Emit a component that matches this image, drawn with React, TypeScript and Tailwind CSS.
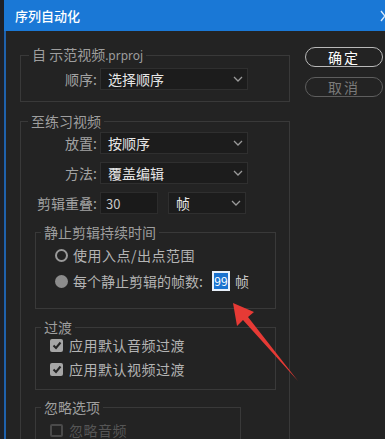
import React from 'react';

function Chevron() {
  return (
    <svg width="10" height="6" viewBox="0 0 10 6" className="shrink-0">
      <polyline points="1,1 5,5 9,1" fill="none" stroke="#9a9a9a" strokeWidth="1.3" />
    </svg>
  );
}

function Select({ value, width = 'w-[148px]' }: { value: string; width?: string }) {
  return (
    <div
      className={`flex h-[22px] ${width} items-center justify-between border border-[#2f2f2f] bg-[#1c1c1c] pl-[7px] pr-[4px] text-[14px] leading-none text-[#e6e6e6]`}
    >
      <span>{value}</span>
      <Chevron />
    </div>
  );
}

function Row({ label, children }: { label: string; children: React.ReactNode }) {
  return (
    <div className="flex h-[22px] items-center">
      <span className="w-[76px] text-right text-[14px] leading-none text-[#a2a2a2]">{label}</span>
      <div className="ml-[3px] flex items-center">{children}</div>
    </div>
  );
}

function CheckBox({ label, checked = true }: { label: string; checked?: boolean }) {
  return (
    <div className="flex h-[18px] items-center gap-[6px] pl-[14px]">
      {checked ? (
        <span className="flex h-[13px] w-[13px] items-center justify-center rounded-[2px] bg-[#a6a6a6]">
          <svg width="10" height="9" viewBox="0 0 10 9">
            <polyline points="1.5,4.5 4,7 8.5,1.5" fill="none" stroke="#262626" strokeWidth="2" />
          </svg>
        </span>
      ) : (
        <span className="h-[13px] w-[13px] rounded-[2px] border-2 border-[#4a4a4a]" />
      )}
      <span className={`text-[14px] leading-none tracking-[0.5px] ${checked ? 'text-[#b4b4b4]' : 'text-[#555555]'}`}>{label}</span>
    </div>
  );
}

function Legend({ children, ml = 'ml-[8px]' }: { children: React.ReactNode; ml?: string }) {
  return (
    <legend className={`${ml} px-[3px] text-[14px] leading-[20px] text-[#9e9e9e]`}>{children}</legend>
  );
}

export default function App() {
  return (
    <div className="relative h-[439px] w-[385px] overflow-hidden bg-[#1d2129] font-['Noto_Sans_CJK_SC',sans-serif]">
      <div className="ml-[4px] flex h-full flex-col border-l-2 border-[#1f62ad] bg-[#232323]">
        {/* title bar */}
        <div className="-ml-[2px] flex h-[31px] shrink-0 items-center justify-between bg-[#1a78d6] pl-[11px]">
          <span className="text-[13px] font-medium text-white">序列自动化</span>
          <svg width="6" height="12" viewBox="0 0 6 12" className="mr-[-1px]">
            <polyline points="1,1 5,6 1,11" fill="none" stroke="#d8e9fb" strokeWidth="1.4" />
          </svg>
        </div>

        <div className="flex pt-[13px]">
          {/* left column */}
          <div className="ml-[14px] flex w-[270px] flex-col">
            <fieldset className="border border-[#393939] pb-[11px]">
              <Legend ml="ml-[8px]">
                自 示范视频<span className="font-['Noto_Sans',sans-serif] text-[12px]">.prproj</span>
              </Legend>
              <div className="mt-[2px]">
                <Row label="顺序:">
                  <Select value="选择顺序" />
                </Row>
              </div>
            </fieldset>

            <fieldset className="mt-[9px] border border-[#393939] pb-[20px]">
              <Legend ml="ml-[7px]">至练习视频</Legend>
              <div className="mt-[1px] flex flex-col gap-[8px]">
                <Row label="放置:">
                  <Select value="按顺序" />
                </Row>
                <Row label="方法:">
                  <Select value="覆盖编辑" />
                </Row>
                <Row label="剪辑重叠:">
                  <div className="flex h-[22px] w-[58px] items-center border border-[#2c2c2c] bg-[#1a1a1a] pl-[5px] text-[13px] leading-none text-[#c8c8c8]">
                    30
                  </div>
                  <div className="ml-[10px]">
                    <Select value="帧" width="w-[78px]" />
                  </div>
                </Row>
              </div>

              <fieldset className="ml-[14px] mt-[8px] w-[241px] border border-[#393939] pb-[17px]">
                <Legend ml="ml-[5px]">静止剪辑持续时间</Legend>
                <div className="mt-[3px] flex flex-col gap-[6px]">
                  <div className="flex h-[20px] items-center gap-[5px] pl-[19px]">
                    <span className="h-[13px] w-[13px] rounded-full border-2 border-[#9a9a9a]" />
                    <span className="text-[14px] leading-none tracking-[0.5px] text-[#b4b4b4]">使用入点/出点范围</span>
                  </div>
                  <div className="flex h-[20px] items-center gap-[5px] pl-[19px]">
                    <span className="h-[13px] w-[13px] rounded-full bg-[#8c8c8c]" />
                    <span className="text-[14px] leading-none text-[#b4b4b4]">每个静止剪辑的帧数:</span>
                    <span className="ml-[4px] flex h-[20px] w-[18px] items-center justify-center border-2 border-[#e8f0fa] bg-[#1a72cf] text-[12px] leading-none text-white">
                      99
                    </span>
                    <span className="text-[14px] leading-none text-[#c4c4c4]">帧</span>
                  </div>
                </div>
              </fieldset>

              <fieldset className="ml-[14px] mt-[9px] w-[241px] border border-[#393939] pb-[11px]">
                <legend className="ml-[5px] px-[3px] text-[14px] leading-[18px] text-[#9e9e9e]">过渡</legend>
                <div className="flex flex-col gap-[6px]">
                  <CheckBox label="应用默认音频过渡" />
                  <CheckBox label="应用默认视频过渡" />
                </div>
              </fieldset>

              <fieldset className="ml-[14px] mt-[7px] w-[206px] border border-[#393939] pb-[11px]">
                <Legend ml="ml-[5px]">忽略选项</Legend>
                <div className="mt-[4px]">
                  <CheckBox label="忽略音频" checked={false} />
                </div>
              </fieldset>
            </fieldset>
          </div>

          {/* right column */}
          <div className="ml-[15px] mt-[3px] flex flex-col gap-[10px]">
            <button className="flex h-[20px] w-[78px] items-center justify-center rounded-full border-[1.5px] border-[#b9b9b9] text-[14px] leading-none tracking-[2px] text-white">
              确定
            </button>
            <button className="flex h-[20px] w-[78px] items-center justify-center rounded-full border-[1.5px] border-[#5e5e5e] text-[14px] leading-none tracking-[2px] text-[#7a7a7a]">
              取消
            </button>
          </div>
        </div>
      </div>

      {/* red annotation arrow */}
      <svg className="pointer-events-none absolute left-0 top-0" width="385" height="439" viewBox="0 0 385 439">
        <polygon points="233,303 254,312 248,317 298,381 243,320 237,326" fill="#e63a35" />
      </svg>
    </div>
  );
}
